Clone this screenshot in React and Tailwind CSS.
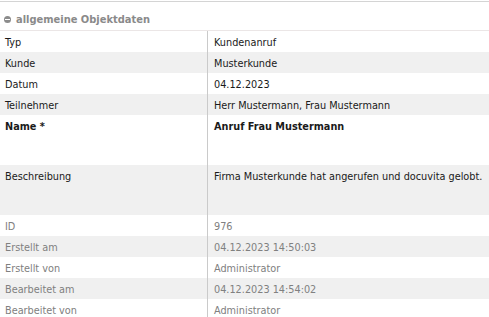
import React from "react";

const mainRows = [
  { label: "Typ", value: "Kundenanruf" },
  { label: "Kunde", value: "Musterkunde" },
  { label: "Datum", value: "04.12.2023" },
  { label: "Teilnehmer", value: "Herr Mustermann, Frau Mustermann" },
  { label: "Name *", value: "Anruf Frau Mustermann", bold: true, tall: true },
  { label: "Beschreibung", value: "Firma Musterkunde hat angerufen und docuvita gelobt.", tall: true },
];

const metaRows = [
  { label: "ID", value: "976" },
  { label: "Erstellt am", value: "04.12.2023 14:50:03" },
  { label: "Erstellt von", value: "Administrator" },
  { label: "Bearbeitet am", value: "04.12.2023 14:54:02" },
  { label: "Bearbeitet von", value: "Administrator" },
];

function Row({ row, index, muted }) {
  const striped = index % 2 === 1;
  return (
    <div
      className={`flex ${row.tall ? "h-[50px]" : "h-[21px]"} ${striped ? "bg-[#f0f0f0]" : "bg-white"} ${
        muted ? "text-[#808080]" : "text-[#1a1a1a]"
      } ${row.bold ? "font-bold" : ""}`}
    >
      <div className="w-[207px] shrink-0 pl-[5px] pt-[5px]">{row.label}</div>
      <div className="w-px shrink-0 bg-[#cacaca]" />
      <div className="flex-1 pl-[6px] pt-[5px] whitespace-nowrap">{row.value}</div>
    </div>
  );
}

export default function App() {
  return (
    <div
      className="w-[489px] h-[317px] overflow-hidden bg-white text-[10.8px] leading-[14px]"
      style={{ fontFamily: "'DejaVu Sans Condensed', 'DejaVu Sans', sans-serif" }}
    >
      <div className="h-[2px] border-t border-[#d4d4d4] mt-px" />
      <div className="h-[28px] flex items-end pb-[3px] pl-[4px] gap-[5px] border-b border-[#ebe6e6]">
        <span className="w-[7px] h-[7px] rounded-full bg-[#8c8c8c] flex items-center justify-center mb-[4px]">
          <span className="w-[5px] h-px bg-white" />
        </span>
        <span className="font-bold text-[#8a8a8a] text-[11px]">allgemeine Objektdaten</span>
      </div>
      {mainRows.map((r, i) => (
        <Row key={r.label} row={r} index={i} />
      ))}
      {metaRows.map((r, i) => (
        <Row key={r.label} row={r} index={i} muted />
      ))}
    </div>
  );
}
